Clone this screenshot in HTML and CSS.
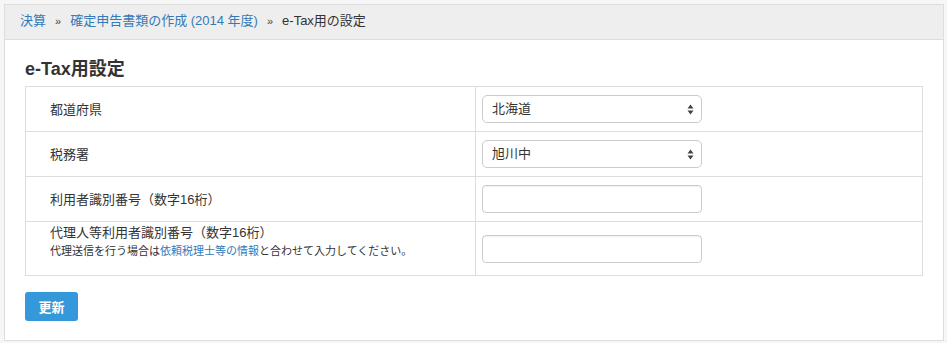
FILE: index.html
```html
<!DOCTYPE html>
<html lang="ja">
<head>
<meta charset="utf-8">
<link rel="stylesheet" href="styles.css">
</head>
<body>
<div class="panel">
  <div class="breadcrumb">
    <a href="#">決算</a><span class="sep">»</span><a href="#">確定申告書類の作成 (2014 年度)</a><span class="sep">»</span><span class="current">e-Tax用の設定</span>
  </div>
  <div class="content">
    <h2 class="title">e-Tax用設定</h2>
    <table class="form-table">
      <tr>
        <td class="label">都道府県</td>
        <td class="field">
          <div class="select"><span>北海道</span>
            <svg class="arrows" width="7" height="11" viewBox="0 0 7 11"><path d="M3.5 0.5 L6.5 4.5 H0.5 Z M3.5 10.5 L6.5 6.5 H0.5 Z" fill="#444"/></svg>
          </div>
        </td>
      </tr>
      <tr>
        <td class="label">税務署</td>
        <td class="field">
          <div class="select"><span>旭川中</span>
            <svg class="arrows" width="7" height="11" viewBox="0 0 7 11"><path d="M3.5 0.5 L6.5 4.5 H0.5 Z M3.5 10.5 L6.5 6.5 H0.5 Z" fill="#444"/></svg>
          </div>
        </td>
      </tr>
      <tr>
        <td class="label">利用者識別番号（数字16桁）</td>
        <td class="field"><input class="input" type="text"></td>
      </tr>
      <tr class="tall">
        <td class="label label-top">
          <div>代理人等利用者識別番号（数字16桁）</div>
          <div class="help">代理送信を行う場合は<a href="#">依頼税理士等の情報</a>と合わせて入力してください。</div>
        </td>
        <td class="field"><input class="input" type="text"></td>
      </tr>
    </table>
    <button class="btn">更新</button>
  </div>
</div>
</body>
</html>
```
FILE: styles.css
```css
html, body {
  margin: 0;
  padding: 0;
}
body {
  background: #f6f6f6;
  padding: 4px 3px 0 4px;
  font-family: "Liberation Sans", "Noto Sans CJK JP", sans-serif;
  font-size: 13px;
  color: #333;
}
a {
  color: #337ab7;
  text-decoration: none;
}
.panel {
  background: #fff;
  border: 1px solid #ddd;
  width: 938px;
}
.breadcrumb {
  background: #eeeeee;
  border-bottom: 1px solid #dddddd;
  height: 34px;
  line-height: 32px;
  padding-left: 15px;
  font-size: 13px;
}
.breadcrumb .sep {
  margin: 0 9px 0 9px;
  font-size: 11px;
  color: #444;
}
.breadcrumb .current {
  color: #333;
}
.content {
  padding: 17px 20px 19px 20px;
}
.title {
  margin: 0 0 4px 0;
  font-size: 18px;
  line-height: 25px;
  font-weight: bold;
  color: #333;
}
.form-table {
  border-collapse: collapse;
  width: 898px;
}
.form-table td {
  border: 1px solid #dddddd;
  padding: 0;
  height: 44px;
  vertical-align: middle;
}
.form-table td.label {
  width: 425px;
  padding-left: 24px;
  padding-bottom: 2px;
  height: 42px;
}
.form-table td.field {
  padding-left: 6px;
}
.form-table tr.tall td {
  height: 53px;
}
.form-table tr.tall td.label-top {
  vertical-align: top;
  padding-top: 2px;
  padding-bottom: 0;
  height: 51px;
}
.label-top div {
  line-height: 18px;
}
.help {
  font-size: 11px;
  line-height: 19px !important;
}
.select {
  position: relative;
  box-sizing: border-box;
  width: 220px;
  height: 28px;
  border: 1px solid #ccc;
  border-radius: 5px;
  background: #fff;
  padding-left: 9px;
  line-height: 25px;
  font-size: 13px;
  color: #333;
}
.select .arrows {
  position: absolute;
  right: 7px;
  top: 8px;
}
.input {
  display: block;
  box-sizing: border-box;
  width: 220px;
  height: 28px;
  border: 1px solid #ccc;
  border-radius: 4px;
  box-shadow: inset 0 1px 1px rgba(0,0,0,0.06);
  margin: 0;
  padding: 0 8px;
  background: #fff;
  font-family: inherit;
}
.btn {
  display: block;
  margin-top: 16px;
  width: 53px;
  height: 29px;
  border: none;
  border-radius: 3px;
  background: #3498db;
  color: #fff;
  font-family: "Liberation Sans", "Noto Sans CJK JP", sans-serif;
  font-weight: bold;
  font-size: 13px;
  padding: 0;
}
```
